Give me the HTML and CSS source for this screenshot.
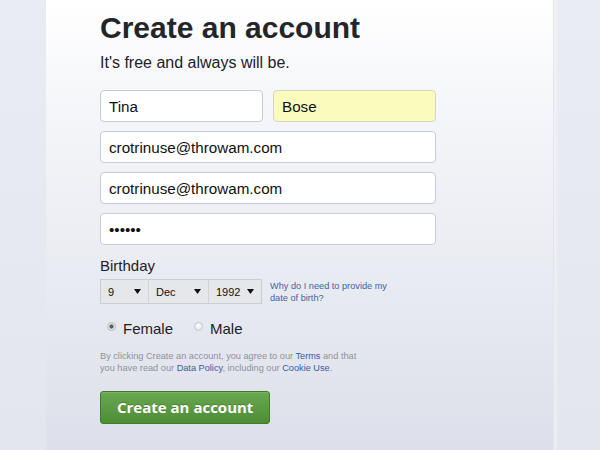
FILE: index.html
```html
<!DOCTYPE html>
<html lang="en">
<head>
<meta charset="utf-8">
<title>Create an account</title>
<link rel="stylesheet" href="styles.css">
</head>
<body>
<main class="panel">
  <h1 class="title">Create an account</h1>
  <p class="subtitle">It's free and always will be.</p>
  <form class="form">
    <div class="name-row">
      <input class="field" type="text" value="Tina">
      <input class="field autofill" type="text" value="Bose">
    </div>
    <input class="field" type="text" value="crotrinuse@throwam.com">
    <input class="field" type="text" value="crotrinuse@throwam.com">
    <input class="field" type="password" value="secret">
    <div class="label">Birthday</div>
    <div class="birthday">
      <div class="selects">
        <div class="select s-day"><span>9</span><svg class="arrow" width="7" height="5" viewBox="0 0 7 5"><path d="M0 0h7L3.5 5z" fill="#111"/></svg></div>
        <div class="select s-month"><span>Dec</span><svg class="arrow" width="7" height="5" viewBox="0 0 7 5"><path d="M0 0h7L3.5 5z" fill="#111"/></svg></div>
        <div class="select s-year"><span>1992</span><svg class="arrow" width="7" height="5" viewBox="0 0 7 5"><path d="M0 0h7L3.5 5z" fill="#111"/></svg></div>
      </div>
      <a class="why" href="#">Why do I need to provide my date of birth?</a>
    </div>
    <div class="gender">
      <label class="option"><span class="radio checked"></span>Female</label>
      <label class="option"><span class="radio"></span>Male</label>
    </div>
    <p class="terms">By clicking Create an account, you agree to our <a href="#">Terms</a> and that you have read our <a href="#">Data Policy</a>, including our <a href="#">Cookie Use</a>.</p>
    <button class="submit" type="button">Create an account</button>
  </form>
</main>
</body>
</html>
```
FILE: styles.css
```css
html, body {
  margin: 0;
  padding: 0;
}
body {
  background: linear-gradient(#e9ecf2, #e3e6ee);
  min-height: 450px;
  font-family: "Liberation Sans", Arial, sans-serif;
  color: #1d2129;
}
.panel {
  box-sizing: border-box;
  width: 507px;
  min-height: 450px;
  margin-left: 46px;
  padding: 11px 0 0 54px;
  background: linear-gradient(#ffffff 0, #f5f6f9 110px, #eceef4 230px, #dde0ea 450px);
  box-shadow: 1px 0 0 #e2e5ec, 4px 0 3px rgba(255,255,255,0.35);
}
.title {
  margin: 0;
  font-size: 30px;
  line-height: 34px;
  font-weight: bold;
  color: #23252a;
}
.subtitle {
  margin: 8px 0 0;
  font-size: 16px;
  line-height: 20px;
  color: #1d2129;
}
.form {
  display: flex;
  flex-direction: column;
  align-items: flex-start;
  margin-top: 17px;
}
.name-row {
  display: flex;
  gap: 10px;
  margin-bottom: 9px;
}
.field {
  box-sizing: border-box;
  width: 336px;
  height: 32px;
  margin: 0 0 9px;
  padding: 0 8px;
  border: 1px solid #c4cbd9;
  border-radius: 4px;
  background: #fff;
  font-family: "Liberation Sans", Arial, sans-serif;
  font-size: 15.2px;
  color: #111;
  outline: none;
}
.name-row .field {
  width: 163px;
  margin: 0;
}
.field.autofill {
  background: #fafcbd;
  border-color: #d4d7c4;
}
.label {
  margin-top: 3px;
  font-size: 15px;
  line-height: 18px;
  color: #1d2129;
}
.birthday {
  display: flex;
  align-items: flex-start;
  gap: 8px;
  margin-top: 4px;
}
.selects {
  display: flex;
  border: 1px solid #c9cdd5;
  background: #e5e7eb;
}
.select {
  box-sizing: border-box;
  height: 23px;
  display: flex;
  align-items: center;
  justify-content: space-between;
  padding: 0 7px 0 7px;
  font-size: 11px;
  color: #111;
  border-left: 1px solid #cfd3da;
}
.select:first-child {
  border-left: none;
}
.s-day { width: 47px; }
.s-month { width: 60px; }
.s-year { width: 53px; }
.arrow {
  display: block;
}
.why {
  width: 125px;
  margin-top: 1px;
  font-size: 9.2px;
  line-height: 12.4px;
  color: #4662a3;
  text-decoration: none;
}
.gender {
  display: flex;
  gap: 21px;
  margin-top: 15px;
  padding-left: 7px;
}
.option {
  display: flex;
  align-items: center;
  gap: 7px;
  font-size: 15px;
  line-height: 18px;
  color: #1d2129;
}
.radio {
  box-sizing: border-box;
  width: 9px;
  height: 9px;
  margin-top: -5px;
  border-radius: 50%;
  border: 1px solid #c3c6cc;
  background: radial-gradient(circle at 50% 35%, #ffffff, #dcdee2);
}
.radio.checked {
  background: radial-gradient(circle, #5a5d63 0 1.8px, #e6e7ea 2.4px);
  border-color: #b5b8be;
}
.terms {
  margin: 12px 0 0;
  width: 266px;
  font-size: 9.2px;
  line-height: 12.4px;
  color: #8d929b;
}
.terms a {
  color: #3d5a9a;
  text-decoration: none;
}
.submit {
  margin-top: 16px;
  height: 33px;
  padding: 0 16px;
  border: 1px solid #3f7a2a;
  border-radius: 3px;
  background: linear-gradient(#69a84f, #4d8d36);
  box-shadow: inset 0 1px 0 rgba(255,255,255,0.15);
  font-family: "Open Sans", "Liberation Sans", sans-serif;
  font-size: 15px;
  font-weight: bold;
  line-height: 31px;
  color: #fff;
  text-shadow: 0 -1px 0 rgba(0,0,0,0.2);
  cursor: pointer;
}
```
